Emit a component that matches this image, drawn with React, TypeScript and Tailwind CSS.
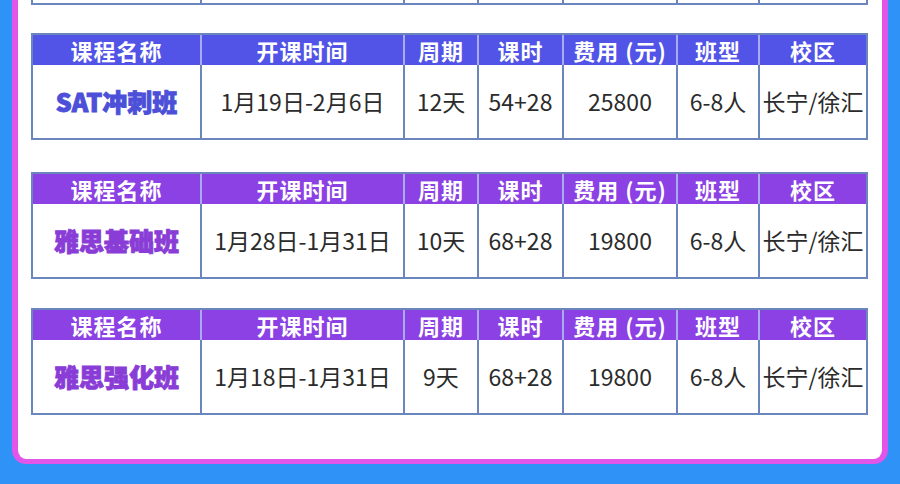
import React from "react";

// ========================================
// Data
// ========================================

type Course = {
  name: string;
  dates: string;
  days: string;
  hours: string;
  fee: string;
  size: string;
  campus: string;
  theme: "blue" | "purple";
};

const headers = ["课程名称", "开课时间", "周期", "课时", "费用 (元)", "班型", "校区"];

const courses: Course[] = [
  {
    name: "SAT冲刺班",
    dates: "1月19日-2月6日",
    days: "12天",
    hours: "54+28",
    fee: "25800",
    size: "6-8人",
    campus: "长宁/徐汇",
    theme: "blue",
  },
  {
    name: "雅思基础班",
    dates: "1月28日-1月31日",
    days: "10天",
    hours: "68+28",
    fee: "19800",
    size: "6-8人",
    campus: "长宁/徐汇",
    theme: "purple",
  },
  {
    name: "雅思强化班",
    dates: "1月18日-1月31日",
    days: "9天",
    hours: "68+28",
    fee: "19800",
    size: "6-8人",
    campus: "长宁/徐汇",
    theme: "purple",
  },
];

const cols = "grid grid-cols-[169px_203px_74px_85px_114px_82px_106px]";
const font = { fontFamily: '"Noto Sans CJK SC", "Noto Sans", sans-serif' };

// ========================================
// Components
// ========================================

function CourseTable({ course, className }: { course: Course; className?: string }) {
  const isBlue = course.theme === "blue";
  const cells = [course.dates, course.days, course.hours, course.fee, course.size, course.campus];

  return (
    <div className={`border-2 border-[#6a86bd] ${className ?? ""}`}>
      <div className={`${cols} h-[30px] ${isBlue ? "bg-[#5154e6]" : "bg-[#8b41e3]"}`}>
        {headers.map((h, i) => (
          <div
            key={h}
            className={`flex items-center justify-center whitespace-pre text-[22px] font-bold leading-none tracking-[1px] text-white ${
              i < headers.length - 1 ? "border-r-2 border-[#a8acef]" : ""
            }`}
          >
            {h}
          </div>
        ))}
      </div>
      <div className={`${cols} h-[73px] bg-white`}>
        <div className="flex items-center justify-center border-r-2 border-[#6a86bd]">
          <span
            className={`text-[25px] font-black leading-none [-webkit-text-stroke:0.9px_currentColor] ${
              isBlue ? "text-[#4c50d8]" : "text-[#8a3dd6]"
            }`}
          >
            {course.name}
          </span>
        </div>
        {cells.map((c, i) => (
          <div
            key={i}
            className={`flex items-center justify-center text-[23px] leading-none text-[#2b2b2b] ${
              i < cells.length - 1 ? "border-r-2 border-[#6a86bd]" : ""
            }`}
          >
            {c}
          </div>
        ))}
      </div>
    </div>
  );
}

export default function App() {
  return (
    <div className="h-[484px] w-[900px] overflow-hidden bg-[#2f92f6] px-[12px]" style={font}>
      <div className="rounded-b-[14px] border-x-[6px] border-b-[5px] border-[#e155e8] bg-white pb-[44px] pl-[13px] pr-[14px]">
        {/* bottom of the table above */}
        <div className={`${cols} h-[5px] border-x-2 border-b-2 border-[#6a86bd]`}>
          {headers.map((h, i) => (
            <div key={h} className={i < headers.length - 1 ? "border-r-2 border-[#6a86bd]" : ""} />
          ))}
        </div>

        <CourseTable course={courses[0]} className="mt-[28px]" />
        <CourseTable course={courses[1]} className="mt-[32px]" />
        <CourseTable course={courses[2]} className="mt-[29px]" />
      </div>
    </div>
  );
}
